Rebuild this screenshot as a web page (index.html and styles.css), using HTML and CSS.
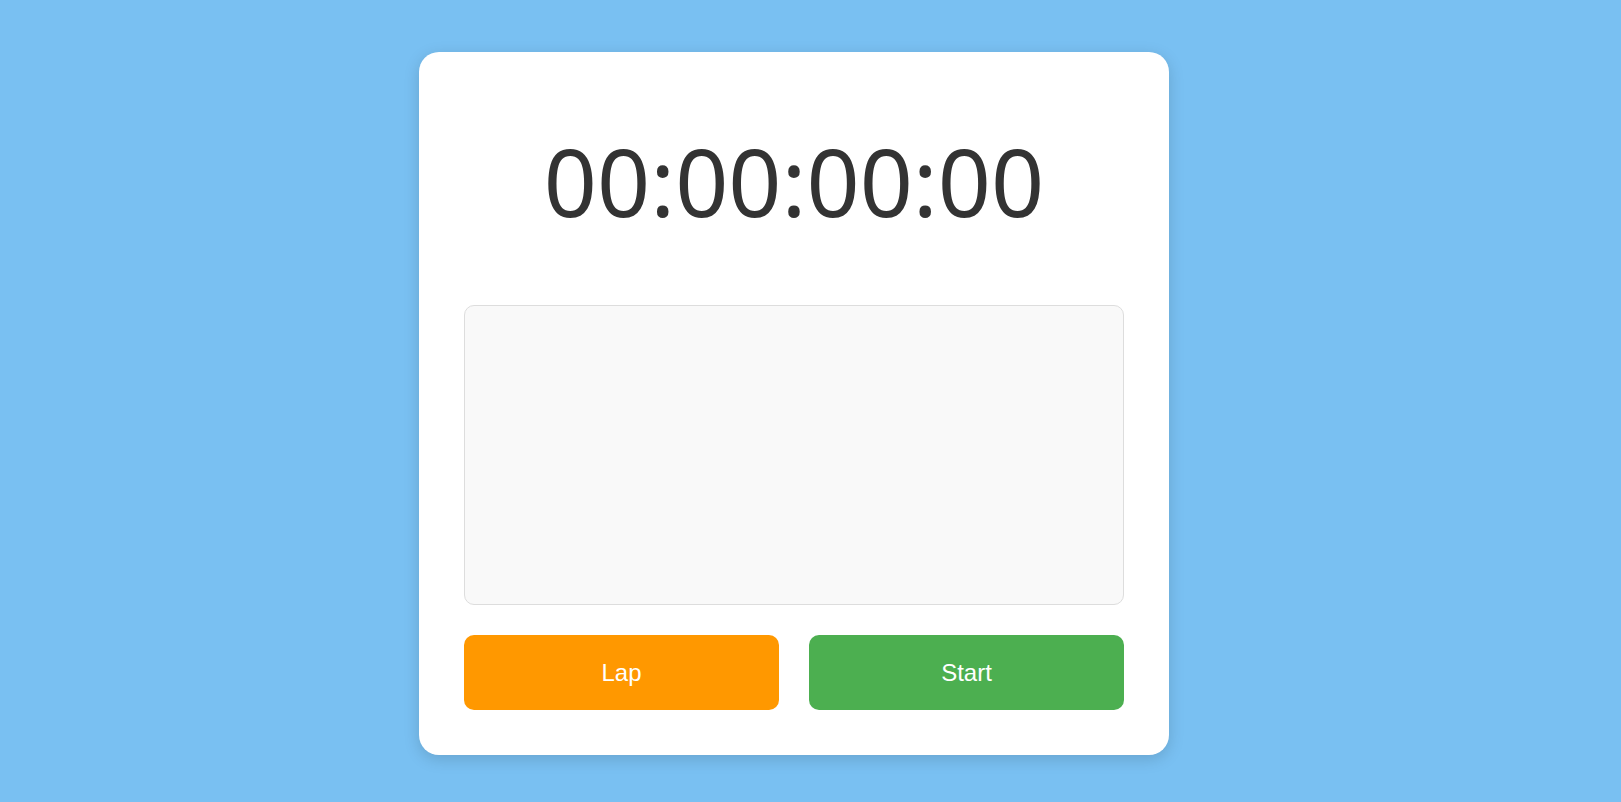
FILE: index.html
```html
<!DOCTYPE html>
<html lang="en">
<head>
<meta charset="utf-8">
<title>Stopwatch</title>
<link rel="stylesheet" href="styles.css">
</head>
<body>
<main class="page">
  <section class="card">
    <div class="time">00:00:00:00</div>
    <div class="laps"></div>
    <div class="controls">
      <button class="btn btn-lap">Lap</button>
      <button class="btn btn-start">Start</button>
    </div>
  </section>
</main>
</body>
</html>
```
FILE: styles.css
```css
html, body {
  margin: 0;
  padding: 0;
  height: 100%;
}
body {
  background: #79c0f2;
  font-family: "Liberation Sans", Arial, sans-serif;
  overflow: hidden;
}
.page {
  display: flex;
  justify-content: center;
  padding: 52px 33px 0 0;
}
.card {
  width: 660px;
  padding: 45px;
  background: #ffffff;
  border-radius: 20px;
  box-shadow: 0 4px 16px rgba(0, 0, 0, 0.15);
}
.time {
  margin: 21px 0 61px;
  text-align: center;
  font-family: "Noto Sans", "Open Sans", sans-serif;
  font-size: 93px;
  line-height: normal;
  color: #333333;
}
.laps {
  height: 298px;
  background: #f9f9f9;
  border: 1px solid #dddddd;
  border-radius: 10px;
}
.controls {
  display: flex;
  gap: 30px;
  margin-top: 30px;
}
.btn {
  flex: 1;
  height: 75px;
  border: none;
  border-radius: 10px;
  color: #ffffff;
  font-family: "Liberation Sans", Arial, sans-serif;
  font-size: 24px;
  cursor: pointer;
}
.btn-lap {
  background: #ff9800;
}
.btn-start {
  background: #4caf50;
}
```
